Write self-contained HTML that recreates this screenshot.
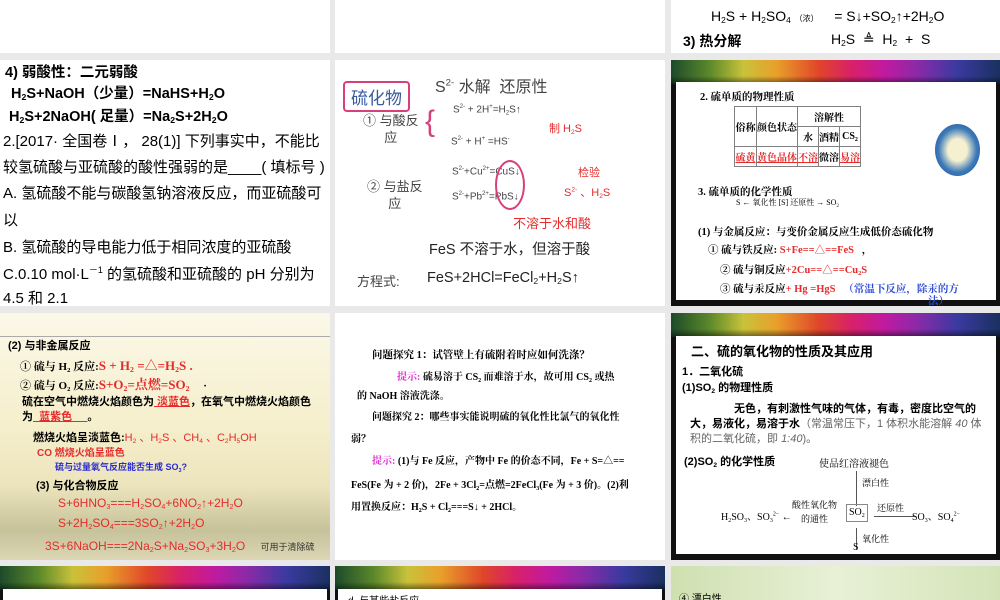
<!DOCTYPE html><html><head><meta charset="utf-8"><style>
*{margin:0;padding:0;box-sizing:border-box}
body{width:1000px;height:600px;overflow:hidden;background:#e9e9e9;font-family:"Liberation Sans","Noto Sans CJK SC",sans-serif;position:relative}
.s{position:absolute;background:#fff;overflow:hidden}
.a{position:absolute;white-space:nowrap}
.r{color:#e52b2b}
sub{font-size:60%;vertical-align:-2px}
sup{font-size:60%}
.rb{position:absolute;left:0;right:0;top:0;height:24px;background:linear-gradient(90deg,#1c4a2a 0%,#5d8a2a 12%,#c9c23a 22%,#e8a02a 32%,#e0452a 45%,#d8206a 55%,#c01aa0 65%,#8a2aa8 75%,#3a3aa0 87%,#1a3060 100%)}
.rb:after{content:"";position:absolute;left:0;right:0;bottom:0;height:8px;background:linear-gradient(rgba(0,0,0,0),rgba(0,0,0,.5))}
.sf{font-family:"Liberation Serif","Noto Serif CJK SC",serif}
</style></head><body>
<!-- row1 -->
<div class="s" style="left:0;top:0;width:330px;height:53px"></div>
<div class="s" style="left:335px;top:0;width:330px;height:53px"></div>
<div class="s" style="left:671px;top:0;width:329px;height:53px">
<div class="a" style="left:40px;top:8px;font-size:14px">H<sub>2</sub>S + H<sub>2</sub>SO<sub>4</sub> <span style="font-size:8px">（浓）</span>&nbsp;&nbsp;&nbsp; = S↓+SO<sub>2</sub>↑+2H<sub>2</sub>O</div>
<div class="a" style="left:12px;top:31px;font-size:14px;font-weight:bold">3) 热分解</div>
<div class="a" style="left:160px;top:31px;font-size:14px">H<sub>2</sub>S &nbsp;≜&nbsp; H<sub>2</sub> &nbsp;+ &nbsp;S</div>
</div>
<!-- row2 -->
<div class="s" style="left:0;top:60px;width:330px;height:246px;font-size:15px;line-height:1">
<div class="a" style="left:5px;top:6px;font-weight:bold;font-size:14.5px">4) 弱酸性：二元弱酸</div>
<div class="a" style="left:11px;top:27px;font-weight:bold;font-size:14.5px">H<sub>2</sub>S+NaOH（少量）=NaHS+H<sub>2</sub>O</div>
<div class="a" style="left:9px;top:50px;font-weight:bold;font-size:14.5px">H<sub>2</sub>S+2NaOH( 足量）=Na<sub>2</sub>S+2H<sub>2</sub>O</div>
<div class="a" style="left:3px;top:74px">2.[2017· 全国卷Ⅰ， 28(1)] 下列事实中，不能比</div>
<div class="a" style="left:3px;top:100px">较氢硫酸与亚硫酸的酸性强弱的是____( 填标号 )</div>
<div class="a" style="left:3px;top:126px">A. 氢硫酸不能与碳酸氢钠溶液反应，而亚硫酸可</div>
<div class="a" style="left:3px;top:153px">以</div>
<div class="a" style="left:3px;top:180px">B. 氢硫酸的导电能力低于相同浓度的亚硫酸</div>
<div class="a" style="left:3px;top:206px">C.0.10 mol·L<sup>－1</sup> 的氢硫酸和亚硫酸的 pH 分别为</div>
<div class="a" style="left:3px;top:231px">4.5 和 2.1</div>
</div>
<div class="s" style="left:335px;top:60px;width:330px;height:246px;color:#444">
<div class="a" style="left:8px;top:21px;border:2px solid #d8407a;border-radius:4px;padding:1px 6px;font-size:17px;color:#3a5aa0">硫化物</div>
<div class="a" style="left:100px;top:13px;font-size:16px">S<sup>2-</sup> 水解 &nbsp;还原性</div>
<div class="a" style="left:28px;top:52px;font-size:13px;line-height:17px;text-align:center">① 与酸反<br>应</div>
<div class="a" style="left:90px;top:45px;font-size:30px;color:#d8407a;font-weight:100">{</div>
<div class="a" style="left:118px;top:44px;font-size:10px">S<sup>2-</sup> + 2H<sup>+</sup>=H<sub>2</sub>S↑</div>
<div class="a" style="left:116px;top:76px;font-size:10px">S<sup>2-</sup> + H<sup>+</sup> =HS<sup>-</sup></div>
<div class="a r" style="left:214px;top:60px;font-size:11px">制 H<sub>2</sub>S</div>
<div class="a" style="left:32px;top:118px;font-size:13px;line-height:17px;text-align:center">② 与盐反<br>应</div>
<div class="a" style="left:117px;top:106px;font-size:10px">S<sup>2-</sup>+Cu<sup>2+</sup>=CuS↓</div>
<div class="a" style="left:117px;top:131px;font-size:10px">S<sup>2-</sup>+Pb<sup>2+</sup>=PbS↓</div>
<div class="a" style="left:160px;top:100px;width:30px;height:50px;border:2px solid #d8407a;border-radius:50%"></div>
<div class="a r" style="left:243px;top:104px;font-size:11px">检验</div>
<div class="a r" style="left:229px;top:124px;font-size:11px">S<sup>2-</sup> 、H<sub>2</sub>S</div>
<div class="a r" style="left:178px;top:153px;font-size:13px">不溶于水和酸</div>
<div class="a" style="left:94px;top:178px;font-size:14.5px;color:#222">FeS 不溶于水，但溶于酸</div>
<div class="a" style="left:22px;top:211px;font-size:13px">方程式:</div>
<div class="a" style="left:92px;top:210px;font-size:14.5px;color:#222">FeS+2HCl=FeCl<sub>2</sub>+H<sub>2</sub>S↑</div>
</div>
<div class="s" style="left:671px;top:60px;width:329px;height:246px;background:#111">
<div class="rb"></div>
<div class="a sf" style="left:5px;top:22px;width:320px;height:218px;background:#fff;font-size:10.5px;font-weight:bold">
<div class="a" style="left:24px;top:7px">2. 硫单质的物理性质</div>
<table style="position:absolute;left:58px;top:24px;border-collapse:collapse;font-size:10px;text-align:center" border="1">
<tr><td rowspan="2" style="width:22px;height:40px">俗称</td><td rowspan="2" style="width:28px">颜色状态</td><td colspan="3" style="height:20px">溶解性</td></tr>
<tr><td style="width:17px;height:20px">水</td><td style="width:20px">酒精</td><td style="width:21px">CS<sub>2</sub></td></tr>
<tr class="r"><td style="height:20px"><u>硫黄</u></td><td><u>黄色晶体</u></td><td><u>不溶</u></td><td style="color:#000">微溶</td><td><u>易溶</u></td></tr></table>
<div class="a" style="left:259px;top:42px;width:45px;height:52px;border-radius:50%;background:radial-gradient(#f4f0d0 30%,#3d7ab8 60%,#1a4a90)"></div>
<div class="a" style="left:22px;top:102px">3. 硫单质的化学性质</div>
<div class="a" style="left:60px;top:115px;font-size:8px;font-weight:normal">S ← 氧化性 [S] 还原性 → SO<sub>2</sub></div>
<div class="a" style="left:22px;top:142px">(1) 与金属反应：与变价金属反应生成低价态硫化物</div>
<div class="a" style="left:32px;top:160px">① 硫与铁反应: <span class="r">S+Fe==△==FeS</span>&nbsp;&nbsp; ，</div>
<div class="a" style="left:44px;top:180px">② 硫与铜反应<span class="r">+2Cu==△==Cu<sub>2</sub>S</span></div>
<div class="a" style="left:44px;top:199px">③ 硫与汞反应<span class="r">+ Hg =HgS</span> &nbsp;&nbsp;<span style="color:#2a4ad8">（常温下反应，除汞的方</span></div>
<div class="a" style="left:252px;top:211px;color:#2a4ad8">法）</div>
</div></div>
<!-- row3 -->
<div class="s" style="left:0;top:313px;width:330px;height:247px;background:linear-gradient(180deg,#fbf8e8 0%,#f5efcc 45%,#ece4bc 70%,#c6c29a 88%,#dcd6b4 100%);font-size:11px;font-weight:bold">
<div class="a" style="left:0;top:23px;width:330px;border-top:1px solid #aaa"></div>
<div class="a" style="left:8px;top:24px">(2) 与非金属反应</div>
<div class="a sf" style="left:20px;top:42px">① 硫与 H<sub>2</sub> 反应:<span class="r" style="font-size:13px">S + H<sub>2</sub> =△=H<sub>2</sub>S .</span></div>
<div class="a sf" style="left:20px;top:61px">② 硫与 O<sub>2</sub> 反应:<span class="r" style="font-size:13px">S+O<sub>2</sub>=点燃=SO<sub>2</sub></span> &nbsp;&nbsp;&nbsp;&nbsp;·</div>
<div class="a" style="left:22px;top:80px;font-size:11px">硫在空气中燃烧火焰颜色为<u class="r">&nbsp;淡蓝色</u>，在氧气中燃烧火焰颜色</div>
<div class="a" style="left:22px;top:95px;font-size:11px">为<u class="r">&nbsp;&nbsp;蓝紫色&nbsp;&nbsp;&nbsp;&nbsp;&nbsp;</u>。</div>
<div class="a" style="left:33px;top:116px">燃烧火焰呈淡蓝色:<span class="r" style="font-weight:normal">H<sub>2</sub> 、H<sub>2</sub>S 、CH<sub>4</sub> 、C<sub>2</sub>H<sub>5</sub>OH</span></div>
<div class="a r" style="left:37px;top:131px;font-size:10px">CO 燃烧火焰呈蓝色</div>
<div class="a" style="left:55px;top:147px;font-size:9px;color:#2a2ad0">硫与过量氧气反应能否生成 SO<sub>3</sub>?</div>
<div class="a" style="left:36px;top:164px">(3) 与化合物反应</div>
<div class="a r" style="left:58px;top:183px;font-size:12px;font-weight:normal">S+6HNO<sub>3</sub>===H<sub>2</sub>SO<sub>4</sub>+6NO<sub>2</sub>↑+2H<sub>2</sub>O</div>
<div class="a r" style="left:58px;top:203px;font-size:12px;font-weight:normal">S+2H<sub>2</sub>SO<sub>4</sub>===3SO<sub>2</sub>↑+2H<sub>2</sub>O</div>
<div class="a r" style="left:45px;top:226px;font-size:12px;font-weight:normal">3S+6NaOH===2Na<sub>2</sub>S+Na<sub>2</sub>SO<sub>3</sub>+3H<sub>2</sub>O <span style="color:#333;font-size:9px;margin-left:12px">可用于清除硫</span></div>
</div>
<div class="s sf" style="left:335px;top:313px;width:330px;height:247px;font-size:10px;font-weight:bold">
<div class="a" style="left:37px;top:34px;font-size:10.5px">问题探究 1：试管壁上有硫附着时应如何洗涤？</div>
<div class="a" style="left:62px;top:55px"><span style="color:#e030d0">提示:</span> 硫易溶于 CS<sub>2</sub> 而难溶于水，故可用 CS<sub>2</sub> 或热</div>
<div class="a" style="left:22px;top:74px">的 NaOH 溶液洗涤。</div>
<div class="a" style="left:37px;top:95px">问题探究 2：哪些事实能说明硫的氧化性比氯气的氧化性</div>
<div class="a" style="left:16px;top:117px">弱？</div>
<div class="a" style="left:37px;top:139px"><span style="color:#e030d0">提示:</span> (1)与 Fe 反应，产物中 Fe 的价态不同，Fe + S=△==</div>
<div class="a" style="left:16px;top:163px">FeS(Fe 为 + 2 价)，2Fe + 3Cl<sub>2</sub>=点燃=2FeCl<sub>3</sub>(Fe 为 + 3 价)。(2)利</div>
<div class="a" style="left:16px;top:185px">用置换反应：H<sub>2</sub>S + Cl<sub>2</sub>===S↓ + 2HCl。</div>
</div>
<div class="s" style="left:671px;top:313px;width:329px;height:247px;background:#111">
<div class="rb"></div>
<div class="a" style="left:5px;top:23px;width:320px;height:218px;background:#fff;font-size:11px;font-weight:bold">
<div class="a" style="left:15px;top:5px;font-size:13px">二、硫的氧化物的性质及其应用</div>
<div class="a" style="left:6px;top:27px">1．二氧化硫</div>
<div class="a" style="left:6px;top:43px">(1)SO<sub>2</sub> 的物理性质</div>
<div class="a" style="left:58px;top:64px">无色，有刺激性气味的气体，有毒，密度比空气的</div>
<div class="a" style="left:14px;top:79px">大，易液化，易溶于水<span style="font-weight:normal;color:#666">（常温常压下，1 体积水能溶解 <i>40</i> 体</span></div>
<div class="a" style="left:14px;top:94px;font-weight:normal;color:#666">积的二氧化硫，即 <i>1:40</i>)。</div>
<div class="a" style="left:8px;top:117px">(2)SO<sub>2</sub> 的化学性质</div>
<div class="a sf" style="left:143px;top:119px;font-weight:normal;font-size:10px">使品红溶液褪色</div>
<div class="a" style="left:180px;top:135px;height:35px;border-left:1px solid #555"></div>
<div class="a sf" style="left:186px;top:140px;font-weight:normal;font-size:9px">漂白性</div>
<div class="a sf" style="left:45px;top:172px;font-weight:normal;font-size:10px">H<sub>2</sub>SO<sub>3</sub>、SO<sub>3</sub><sup>2−</sup> ←</div>
<div class="a sf" style="left:116px;top:162px;font-weight:normal;font-size:9px;text-align:center;line-height:14px">酸性氧化物<br>的通性</div>
<div class="a sf" style="left:170px;top:168px;border:1px solid #888;padding:2px;font-weight:normal;font-size:10px">SO<sub>2</sub></div>
<div class="a sf" style="left:201px;top:165px;font-weight:normal;font-size:9px">还原性</div>
<div class="a" style="left:198px;top:180px;width:40px;border-top:1px solid #555"></div>
<div class="a sf" style="left:236px;top:172px;font-weight:normal;font-size:10px">SO<sub>3</sub>、SO<sub>4</sub><sup>2−</sup></div>
<div class="a" style="left:180px;top:192px;height:22px;border-left:1px solid #555"></div>
<div class="a sf" style="left:186px;top:196px;font-weight:normal;font-size:9px">氧化性</div>
<div class="a sf" style="left:177px;top:206px;font-weight:normal;font-size:10px">S</div>
</div></div>
<!-- row4 -->
<div class="s" style="left:0;top:566px;width:330px;height:34px;background:#111"><div class="rb"></div><div class="a" style="left:3px;top:23px;width:324px;height:20px;background:#fff"></div></div>
<div class="s" style="left:335px;top:566px;width:330px;height:34px;background:#111"><div class="rb"></div><div class="a" style="left:3px;top:23px;width:324px;height:20px;background:#fff;font-size:10px;padding:3px 10px">d. 与某些盐反应</div></div>
<div class="s" style="left:671px;top:566px;width:329px;height:34px;background:linear-gradient(90deg,#cfe0b0,#e8f0d6 50%,#d4e4b8)"><div class="a" style="left:8px;top:24px;font-size:10px">④ 漂白性</div></div>
</body></html>
